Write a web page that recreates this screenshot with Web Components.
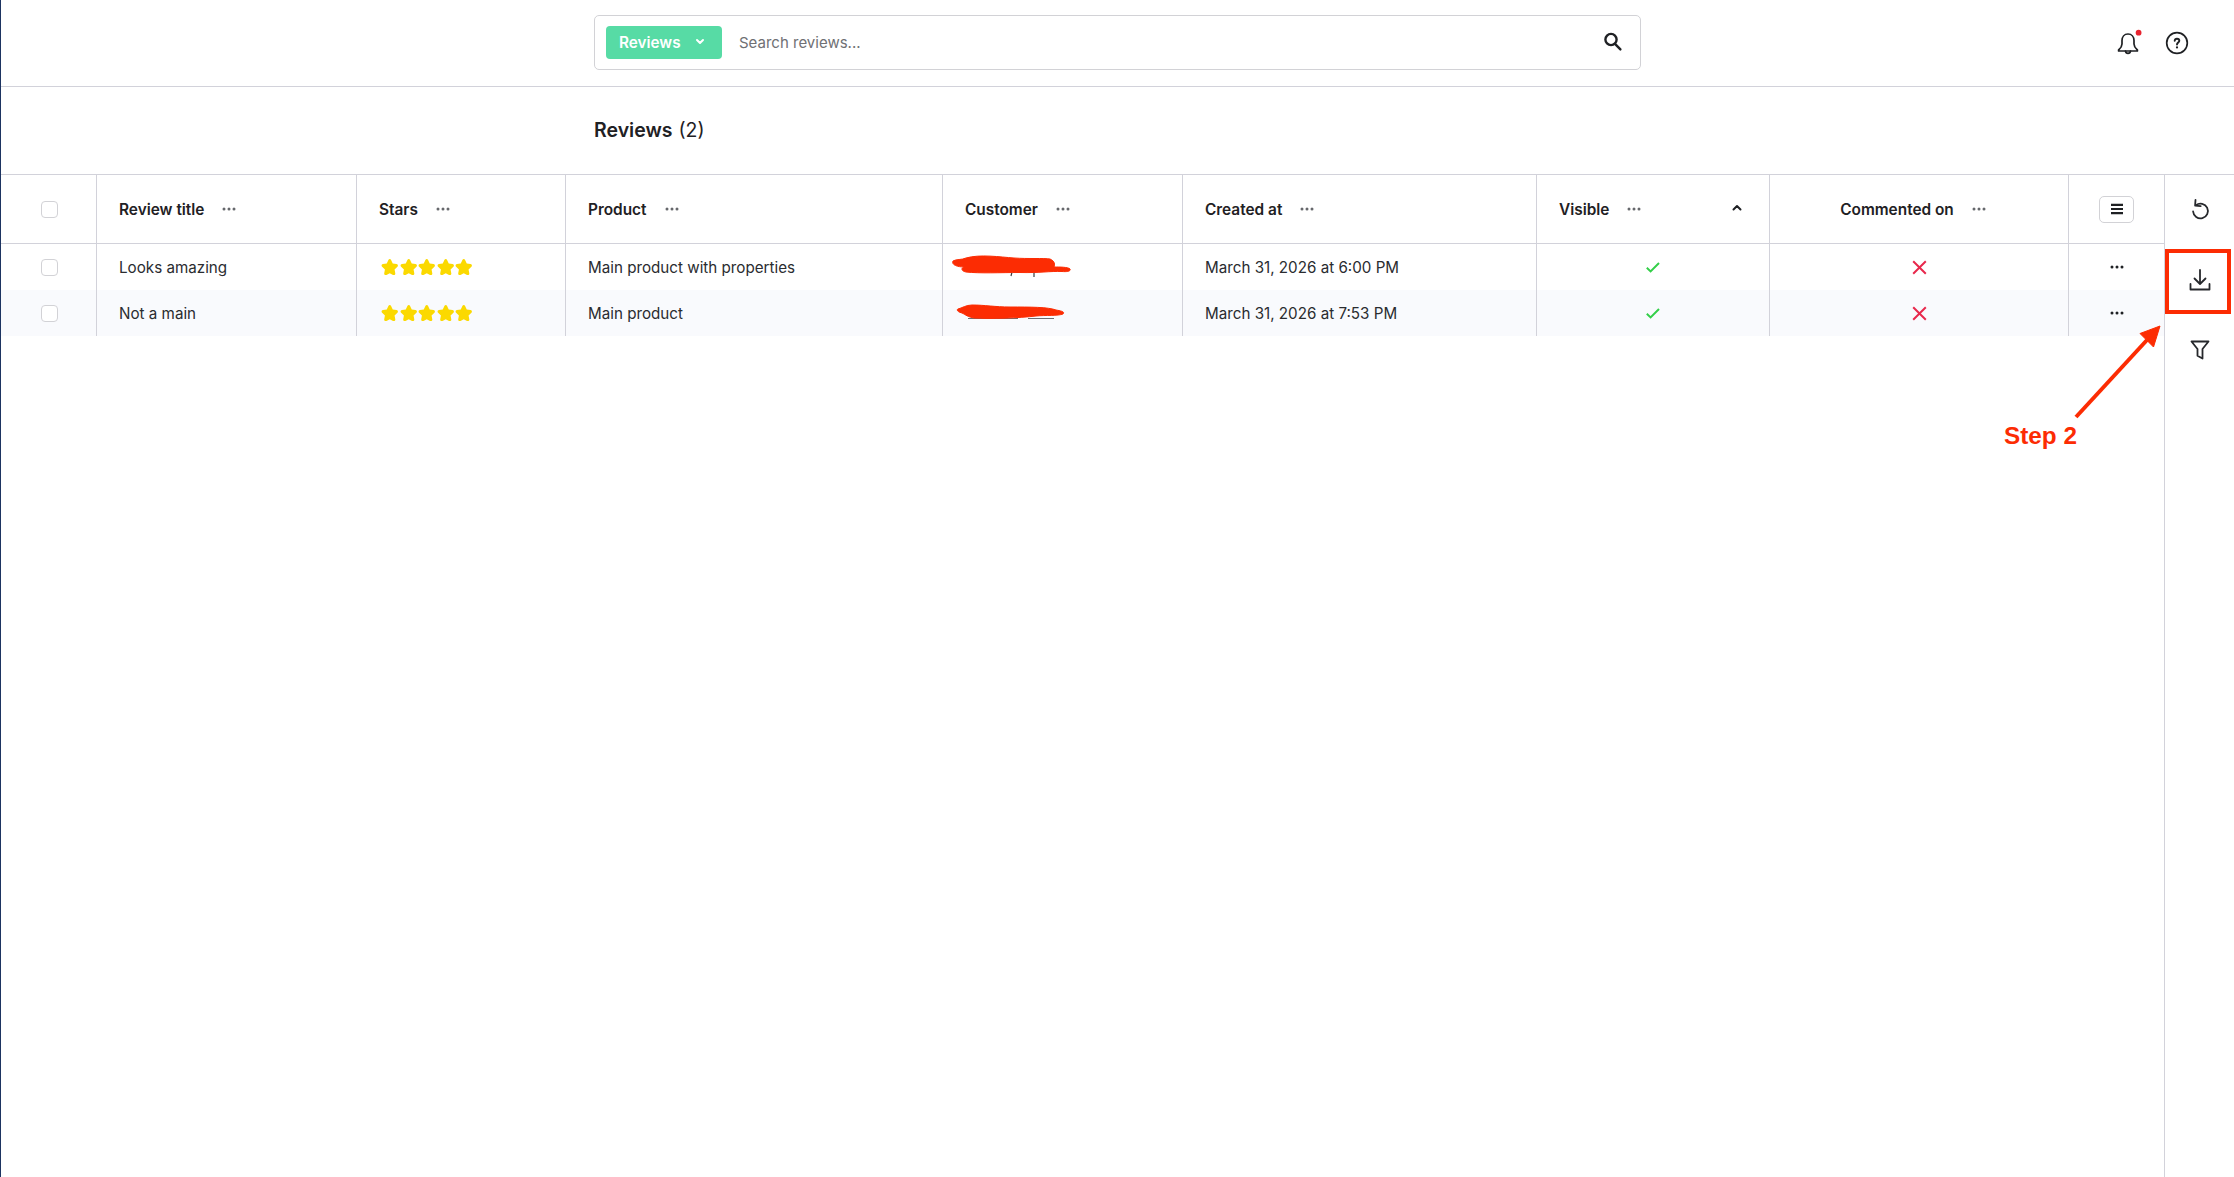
<!DOCTYPE html>
<html><head><meta charset="utf-8"><title>Reviews</title>
<style>
html,body{margin:0;height:100%;background:#fff}
body{font-family:Inter,"Liberation Sans",sans-serif;color:#1f2124;overflow:hidden}
</style></head><body>
<review-app></review-app>
<template id="t-app"><style>
:host{display:grid;grid-template-rows:87px 87px 1fr;height:1177px;box-sizing:border-box;border-left:1px solid #1d3461;position:relative}
.ov{position:absolute;inset:0;pointer-events:none}
.main{display:grid;grid-template-columns:2163px 1fr;min-height:0;border-top:1px solid #d2d2da}
.title{display:flex;align-items:center;padding:0 0 1px 593px}
</style>
<top-bar></top-bar>
<div class="title"><page-title>Reviews<span slot="count">(2)</span></page-title></div>
<div class="main"><review-table></review-table><side-rail></side-rail></div>
<step-annotation class="ov"></step-annotation>
</template>

<template id="t-top"><style>
:host{display:flex;align-items:center;border-bottom:1px solid #d2d2da;box-sizing:border-box;height:87px;padding:0 0 1px 593px;position:relative}
.search{width:1047px;height:55px;box-sizing:border-box;border:1px solid #d2d2d6;border-radius:5px;display:flex;align-items:center;padding:0 16px 0 11px;margin-top:-1px}
.btn{width:116px;height:33px;background:#57dba5;border-radius:4px;color:#fff;font:600 15.3px Inter,sans-serif;display:flex;align-items:center;padding-left:13px;box-sizing:border-box;gap:13px}
.ph{font:400 15px Inter,sans-serif;color:#6f7074;margin-left:17px;flex:1}
.right{position:absolute;right:0;top:0;height:86px;display:flex;align-items:center;gap:22px;padding-right:45px}
svg{display:block}
</style>
<div class="search"><div class="btn">Reviews<svg width="12" height="8" viewBox="0 0 12 8" fill="none" stroke="#fff" stroke-width="2" stroke-linecap="round" stroke-linejoin="round"><path d="M3 2l3 3 3-3"/></svg></div><div class="ph">Search reviews...</div>
<svg width="22" height="22" viewBox="0 0 22 22" fill="none" stroke="#1f2124" stroke-linecap="round"><circle cx="9" cy="8.500" r="5.600" stroke-width="2.400"/><path d="M13 12.800l5.400 5.600" stroke-width="2.400"/></svg></div>
<div class="right">
<svg width="28" height="28" viewBox="0 0 28 28" fill="none" stroke="#1f2124" stroke-width="1.700" stroke-linejoin="round" stroke-linecap="round"><path d="M13 5c-3.800 0-6 3-6 6.500V15c0 2.400-1.400 4.200-3.400 6v1h18.800v-1c-2-1.800-3.400-3.600-3.400-6v-3.500C19 8 16.800 5 13 5z"/><path d="M10.500 22.200c.2 1.500 1.200 2.200 2.500 2.200s2.300-.7 2.500-2.200"/><circle cx="23.600" cy="3.700" r="2.900" fill="#e8232f" stroke="none"/></svg>
<svg width="24" height="24" viewBox="0 0 24 24" fill="none" stroke="#1f2124" stroke-width="1.700" stroke-linecap="round"><circle cx="12" cy="12" r="10.300"/><path d="M9.700 9.800c.1-1.300 1-2.100 2.300-2.100s2.300.8 2.300 2c0 1.800-2.300 1.900-2.300 3.900" stroke-width="1.900"/><circle cx="12" cy="16.400" r="1.100" fill="#1f2124" stroke="none"/></svg>
</div></template>

<template id="t-title"><style>
:host{display:block;font:600 19.5px Inter,sans-serif;color:#1f2124}
::slotted(span){font-weight:400;margin-left:1px}
</style><slot></slot> <slot name="count"></slot></template>

<template id="t-table"><style>
:host{display:block;font:400 15.2px Inter,sans-serif;color:#2a2c30}
.g{display:grid;grid-template-columns:95px 260px 209px 377px 240px 354px 233px 299px 96px}
.h{height:68px;border-bottom:1px solid #d2d2da;box-sizing:content-box}
.r{height:46px}
.r.alt{background:#f9fafd}
</style>
<div class="g h">
<table-cell center divider="0"><check-box></check-box></table-cell>
<head-cell label="Review title"></head-cell>
<head-cell label="Stars"></head-cell>
<head-cell label="Product"></head-cell>
<head-cell label="Customer"></head-cell>
<head-cell label="Created at"></head-cell>
<head-cell label="Visible" sort></head-cell>
<head-cell label="Commented on" mid></head-cell>
<table-cell center><menu-button></menu-button></table-cell>
</div>
<div class="g r">
<table-cell center divider="0"><check-box></check-box></table-cell>
<table-cell>Looks amazing</table-cell>
<table-cell><star-row></star-row></table-cell>
<table-cell>Main product with properties</table-cell>
<table-cell></table-cell>
<table-cell>March 31, 2026 at 6:00 PM</table-cell>
<table-cell center><state-mark ok></state-mark></table-cell>
<table-cell center><state-mark></state-mark></table-cell>
<table-cell center><row-dots></row-dots></table-cell>
</div>
<div class="g r alt">
<table-cell center divider="0"><check-box></check-box></table-cell>
<table-cell>Not a main</table-cell>
<table-cell><star-row></star-row></table-cell>
<table-cell>Main product</table-cell>
<table-cell></table-cell>
<table-cell>March 31, 2026 at 7:53 PM</table-cell>
<table-cell center><state-mark ok></state-mark></table-cell>
<table-cell center><state-mark></state-mark></table-cell>
<table-cell center><row-dots></row-dots></table-cell>
</div></template>

<template id="t-cell"><style>
:host{display:flex;align-items:center;box-sizing:border-box;padding-left:22px;white-space:nowrap;border-left:1px solid #d2d2da;min-width:0;height:100%}
:host([divider="0"]){border-left:0}
:host([center]){justify-content:center;padding-left:0}
</style><slot></slot></template>

<template id="t-head"><style>
:host{display:flex;align-items:center;box-sizing:border-box;padding-left:22px;border-left:1px solid #d2d2da;height:100%;font:600 15.4px Inter,sans-serif;color:#1f2124;white-space:nowrap;position:relative}
:host([mid]){justify-content:center;padding:0 12px 0 0}
svg{display:block;margin-left:18px}
.s{position:absolute;right:26px;top:50%;margin:-5px 0 0}
</style><span id="l"></span>
<svg width="14" height="4" viewBox="0 0 14 4" fill="#66686c"><circle cx="2" cy="2" r="1.500"/><circle cx="7" cy="2" r="1.500"/><circle cx="12" cy="2" r="1.500"/></svg>
<svg class="s" id="s" width="12" height="8" viewBox="0 0 12 8" fill="none" stroke="#1f2124" stroke-width="2" stroke-linecap="round" stroke-linejoin="round"><path d="M2.500 5.500L6 2l3.500 3.500"/></svg>
</template>

<template id="t-check"><style>
:host{display:block;width:17px;height:17px;box-sizing:border-box;border:1px solid #d2d2d6;border-radius:4px;background:#fff;margin-right:-1px}
</style></template>

<template id="t-menu"><style>
:host{display:flex;align-items:center;justify-content:center;width:35px;height:27px;box-sizing:border-box;border:1px solid #d2d2d6;border-radius:5px;background:#fff}
</style><svg width="14" height="12" viewBox="0 0 14 12" fill="none" stroke="#1f2124" stroke-width="2.200"><path d="M1 1.800h12M1 6h12M1 10.200h12"/></svg></template>

<template id="t-dots"><style>:host{display:block}svg{display:block}</style>
<svg width="14" height="4" viewBox="0 0 14 4" fill="#1f2124"><circle cx="2" cy="2" r="1.500"/><circle cx="7" cy="2" r="1.500"/><circle cx="12" cy="2" r="1.500"/></svg></template>

<template id="t-stars"><style>
:host{display:flex;gap:1px;margin:-2px 0 0 2px}
svg{display:block}
</style></template>

<template id="t-mark"><style>:host{display:block}svg{display:block}</style><span id="m"></span></template>

<template id="t-rail"><style>
:host{display:flex;flex-direction:column;align-items:center;border-left:1px solid #d2d2da;padding-top:22px;box-sizing:border-box;height:100%}
svg{display:block;margin:0 0 44px 0}
</style>
<svg width="26" height="26" viewBox="0 0 26 26" fill="none" stroke="#26282c" stroke-width="1.800" stroke-linecap="round" stroke-linejoin="round"><path d="M9 8.100A7.400 7.400 0 1 1 6.100 14.500"/><path d="M8.500 3L8.100 8.600l5.600.5"/></svg>
<svg width="26" height="26" viewBox="0 0 26 26" fill="none" stroke="#26282c" stroke-width="1.800" stroke-linecap="round" stroke-linejoin="round"><path d="M13 3v13.500M7.500 11.500l5.500 5.500 5.500-5.500"/><path d="M3.500 17v5.500h19V17"/></svg>
<svg width="26" height="26" viewBox="0 0 26 26" fill="none" stroke="#26282c" stroke-width="1.800" stroke-linecap="round" stroke-linejoin="round"><path d="M4.500 4.500h17l-6 7.500v9.500l-5-2.800V12z"/></svg>
</template>

<template id="t-step"><style>
:host{display:block}
svg{position:absolute;left:-1px;top:0}
.lbl{position:absolute;left:2003px;top:422px;font:700 24.3px "Liberation Sans",sans-serif;color:#fc2c03;white-space:nowrap}
.box{position:absolute;left:2164px;top:249px;width:66px;height:65px;box-sizing:border-box;border:4px solid #fc2c03}
</style>
<svg width="2234" height="1177" viewBox="0 0 2234 1177" fill="none">
<path d="M1012 272l-1 4M1034 272v5" stroke="#3a3c40" stroke-width="1.200"/>
<path d="M968 318.500h50M1028 318.500h26" stroke="#6b6d72" stroke-width="1"/>
<path d="M953 261C956 259 962 260 966 258C980 254 1000 257 1014 258C1028 259 1044 258 1050 259C1055 261 1055 265 1054 267C1060 267 1068 267 1070 269C1071 271 1068 272 1062 271.500C1050 271 1040 273 1020 272.500C1000 272.500 980 273.500 966 272C961 271 961 268 964 267C958 267 951 265 953 261Z" fill="#fc2c03" stroke="#fc2c03" stroke-width="1" stroke-linejoin="round"/>
<path d="M958 309C962 308 966 305 972 305C985 305 995 307 1010 307C1030 307 1048 307 1056 310C1062 311 1065 312 1063 314C1058 316 1046 315 1036 316C1020 318 990 319 974 318C968 317 966 315 962 313C958 312 956 310 958 309Z" fill="#fc2c03" stroke="#fc2c03" stroke-width="1" stroke-linejoin="round"/>
<path d="M2076 417L2147 340" stroke="#fc2c03" stroke-width="4"/>
<path d="M2160 326L2140 333.500L2153.500 347Z" fill="#fc2c03" stroke="#fc2c03" stroke-width="1" stroke-linejoin="round"/>
</svg>
<div class="box"></div>
<div class="lbl">Step 2</div>
</template>

<script>
function reg(name,tid,init){customElements.define(name,class extends HTMLElement{constructor(){super();const r=this.attachShadow({mode:'open'});r.appendChild(document.getElementById(tid).content.cloneNode(true));}connectedCallback(){if(init)init(this,this.shadowRoot)}})}
reg('review-app','t-app');
reg('top-bar','t-top');
reg('page-title','t-title');
reg('review-table','t-table');
reg('table-cell','t-cell');
reg('head-cell','t-head',(h,r)=>{r.getElementById('l').textContent=h.getAttribute('label');if(!h.hasAttribute('sort'))r.getElementById('s')?.remove();});
reg('check-box','t-check');
reg('menu-button','t-menu');
reg('row-dots','t-dots');
const star='<path d="M12 1.500c.8 0 1.500.5 1.900 1.400l2.300 5 5.400.7c1.900.3 2.600 2.500 1.200 3.800l-4 3.800 1 5.400c.4 1.900-1.600 3.300-3.200 2.400L12 21.500l-4.600 2.500c-1.600.9-3.600-.5-3.200-2.400l1-5.400-4-3.800C-.2 11.100.5 8.900 2.400 8.600l5.400-.7 2.300-5c.4-.9 1.100-1.400 1.900-1.400z"/>';
reg('star-row','t-stars',(h,r)=>{const s='<svg width="17.500" height="17" viewBox="0 0 24 24" fill="#fbd900">'+star+'</svg>';r.querySelectorAll('svg').forEach(e=>e.remove());r.appendChild(document.createRange().createContextualFragment(s.repeat(5)));});
reg('state-mark','t-mark',(h,r)=>{r.getElementById('m').innerHTML=h.hasAttribute('ok')?'<svg width="14" height="11" viewBox="0 0 14 11" fill="none" stroke="#34cf49" stroke-width="2"><path d="M.8 5.800l3.800 3.600L13 1"/></svg>':'<svg width="15" height="15" viewBox="0 0 15 15" fill="none" stroke="#e8284c" stroke-width="2"><path d="M1.200 1.200l12.600 12.600M13.800 1.200L1.200 13.800"/></svg>';});
reg('side-rail','t-rail');
reg('step-annotation','t-step');
</script>
</body></html>
